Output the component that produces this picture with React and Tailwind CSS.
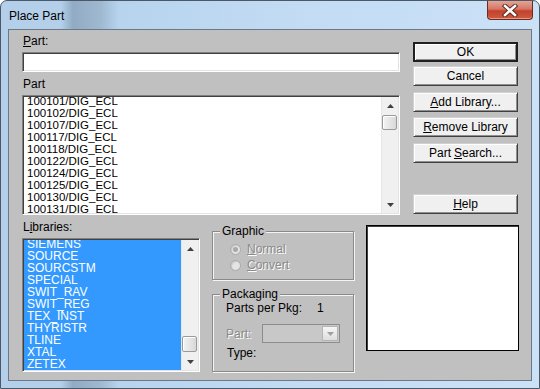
import React from "react";

const sunken =
  "border border-t-[#808080] border-l-[#808080] border-b-white border-r-white shadow-[inset_1px_1px_0_#404040,inset_-1px_-1px_0_#e3e3e3]";

function Arrow({ up }) {
  return (
    <svg width="7" height="4" viewBox="0 0 7 4">
      {up ? (
        <path d="M0 4 L3.5 0 L7 4 Z" fill="#404040" />
      ) : (
        <path d="M0 0 L3.5 4 L7 0 Z" fill="#404040" />
      )}
    </svg>
  );
}

function ScrollBar({ thumbTop, thumbH }) {
  return (
    <div className="w-[17px] h-full flex flex-col bg-[#f0f0f0] border-l border-[#e6e6e6]">
      <div className="h-[17px] flex items-center justify-center">
        <Arrow up />
      </div>
      <div className="flex-1 relative">
        <div
          className="ml-[0px] w-[15px] rounded-[2px] border border-[#9a9a9a] bg-gradient-to-r from-[#f4f4f4] to-[#d8d8d8] shadow-[inset_1px_1px_0_#fff]"
          style={{ marginTop: thumbTop, height: thumbH }}
        />
      </div>
      <div className="h-[17px] flex items-center justify-center">
        <Arrow />
      </div>
    </div>
  );
}

function Btn({ children, def, className = "" }) {
  return (
    <div
      className={
        "h-[20px] w-[105px] flex items-center justify-center bg-[#f0f0f0] text-[12px] leading-[14px] text-black " +
        (def
          ? "border-2 border-[#202020] shadow-[inset_1px_1px_0_#fff,inset_-1px_-1px_0_#909090]"
          : "border border-t-[#d0d0d0] border-l-[#d0d0d0] border-b-[#404040] border-r-[#404040] shadow-[inset_1px_1px_0_#fff,inset_-1px_-1px_0_#909090]") +
        " " +
        className
      }
    >
      {children}
    </div>
  );
}

const parts = [
  "100101/DIG_ECL",
  "100102/DIG_ECL",
  "100107/DIG_ECL",
  "100117/DIG_ECL",
  "100118/DIG_ECL",
  "100122/DIG_ECL",
  "100124/DIG_ECL",
  "100125/DIG_ECL",
  "100130/DIG_ECL",
  "100131/DIG_ECL",
];

const libs = [
  "SIEMENS",
  "SOURCE",
  "SOURCSTM",
  "SPECIAL",
  "SWIT_RAV",
  "SWIT_REG",
  "TEX_INST",
  "THYRISTR",
  "TLINE",
  "XTAL",
  "ZETEX",
];

function Radio({ checked, label, u }) {
  return (
    <div className="h-[16px] flex items-center pl-[17px]">
      <div className="w-[11px] h-[11px] rounded-full border border-[#a8a8a8] bg-[#e4e4e4] flex items-center justify-center shadow-[inset_1px_1px_1px_#c8c8c8]">
        {checked && <div className="w-[5px] h-[5px] rounded-full bg-[#a8a8a8]" />}
      </div>
      <span className="ml-[6px] text-[#8a8a8a] [text-shadow:1px_1px_0_#fff]">
        <span className="underline">{u}</span>
        {label}
      </span>
    </div>
  );
}

export default function App() {
  return (
    <div
      className="w-[540px] h-[389px] overflow-hidden rounded-t-[7px] border border-[#4a5868] bg-[linear-gradient(90deg,#b3cfe9_0px,#b3cfe9_60px,#91abc4_72px,#9fb9d1_100px,#b7d3ee_118px,#c3dcf4_300px,#cbe1f6_100%)] flex flex-col"
      style={{ fontFamily: '"Liberation Sans", Arial, sans-serif' }}
    >
      {/* title bar */}
      <div className="h-[28px] flex items-start shrink-0">
        <div className="pl-[8px] pt-[8px] text-[12px] leading-[14px] text-black">Place Part</div>
        <div className="ml-auto mr-[6px] w-[46px] h-[19px] rounded-b-[4px] border border-t-0 border-[#6b2a22] bg-[linear-gradient(180deg,#e3a595_0%,#d77563_45%,#c2412d_55%,#cf5a3f_100%)] flex items-center justify-center shadow-[inset_0_-1px_0_#e79a86]">
          <svg width="16" height="13" viewBox="0 0 16 13">
            <path d="M3 2 L13 11 M13 2 L3 11" stroke="#5a2a22" strokeWidth="4.5" strokeLinecap="square" />
            <path d="M3 2 L13 11 M13 2 L3 11" stroke="#ffffff" strokeWidth="2.5" strokeLinecap="square" />
          </svg>
        </div>
      </div>

      {/* client */}
      <div
        className="ml-[7px] w-[524px] h-[352px] bg-[#c0c0c0] border border-[#6a7888] text-[12px] leading-[14px] text-black flex flex-col"
      >
        {/* top section */}
        <div className="flex pl-[13px]">
          <div className="w-[378px] flex flex-col">
            <div className="mt-[4px] h-[14px] pl-[1px]">
              <span className="underline">P</span>art:
            </div>
            <div className={"mt-[4px] h-[20px] bg-white " + sunken} />
            <div className="mt-[5px] h-[14px] pl-[1px]">Part</div>
            <div className={"mt-[4px] h-[120px] bg-white flex overflow-hidden p-[1px] " + sunken}>
              <div className="flex-1 overflow-hidden pl-[3px]">
                <div className="-mt-[2px] text-[11.5px] leading-[12px]">
                  {parts.map((p) => (
                    <div key={p} className="h-[12px]">
                      {p}
                    </div>
                  ))}
                </div>
              </div>
              <ScrollBar thumbTop={1} thumbH={15} />
            </div>
          </div>
          <div className="ml-[13px] flex flex-col">
            <Btn def className="mt-[12px]">OK</Btn>
            <Btn className="mt-[4px]">Cancel</Btn>
            <Btn className="mt-[6px]">
              <span className="underline">A</span>dd Library...
            </Btn>
            <Btn className="mt-[5px]">
              <span className="underline">R</span>emove Library
            </Btn>
            <Btn className="mt-[6px]">
              Part <span className="underline ml-[3px]">S</span>earch...
            </Btn>
            <Btn className="mt-[31px]">
              <span className="underline">H</span>elp
            </Btn>
          </div>
        </div>

        {/* bottom section */}
        <div className="flex pl-[13px]">
          <div className="w-[178px] flex flex-col">
            <div className="mt-[5px] h-[14px] pl-[1px]">
              L<span className="underline">i</span>braries:
            </div>
            <div className={"mt-[4px] h-[134px] bg-white flex overflow-hidden p-[1px] " + sunken}>
              <div className="flex-1 overflow-hidden bg-[#3399ff] pl-[3px] text-white">
                <div className="-mt-[2px] text-[12px] leading-[12px]">
                  {libs.map((l) => (
                    <div key={l} className="h-[12px]">
                      {l}
                    </div>
                  ))}
                </div>
              </div>
              <ScrollBar thumbTop={79} thumbH={16} />
            </div>
          </div>

          <div className="ml-[12px] w-[142px] flex flex-col mt-[9px]">
            <fieldset className="h-[56px] border border-[#8a8a8a] shadow-[inset_1px_1px_0_#f4f4f4,1px_1px_0_#f4f4f4]">
              <legend className="ml-[7px] px-[2px] bg-[#c0c0c0] leading-[14px]">Graphic</legend>
              <div className="mt-[3px]">
                <Radio checked u="N" label="ormal" />
                <Radio u="C" label="onvert" />
              </div>
            </fieldset>
            <fieldset className="mt-[7px] h-[85px] border border-[#8a8a8a] shadow-[inset_1px_1px_0_#f4f4f4,1px_1px_0_#f4f4f4]">
              <legend className="ml-[7px] px-[2px] bg-[#c0c0c0] leading-[14px]">Packaging</legend>
              <div className="pl-[13px] flex flex-col">
                <div className="mt-[0px] h-[14px] flex">
                  <span>Parts per Pkg:</span>
                  <span className="ml-[15px]">1</span>
                </div>
                <div className="mt-[9px] h-[19px] flex items-center">
                  <span className="w-[36px] text-[#8a8a8a] [text-shadow:1px_1px_0_#fff]">Part:</span>
                  <div className="w-[78px] h-[19px] bg-[#c8c8c8] border border-[#8c8c8c] flex justify-end items-center pr-[1px]">
                    <div className="w-[16px] h-[15px] border border-[#b4b4b4] bg-gradient-to-b from-[#f6f6f6] to-[#dedede] flex items-center justify-center">
                      <svg width="7" height="4" viewBox="0 0 7 4">
                        <path d="M0 0 L3.5 4 L7 0 Z" fill="#a0a0a0" />
                      </svg>
                    </div>
                  </div>
                </div>
                <div className="mt-[3px] h-[14px] pl-[1px]">Type:</div>
              </div>
            </fieldset>
          </div>

          <div className="ml-[12px] mt-[10px] w-[153px] h-[126px] bg-white border border-black shadow-[inset_1px_1px_0_#404040]" />
        </div>
      </div>
    </div>
  );
}
